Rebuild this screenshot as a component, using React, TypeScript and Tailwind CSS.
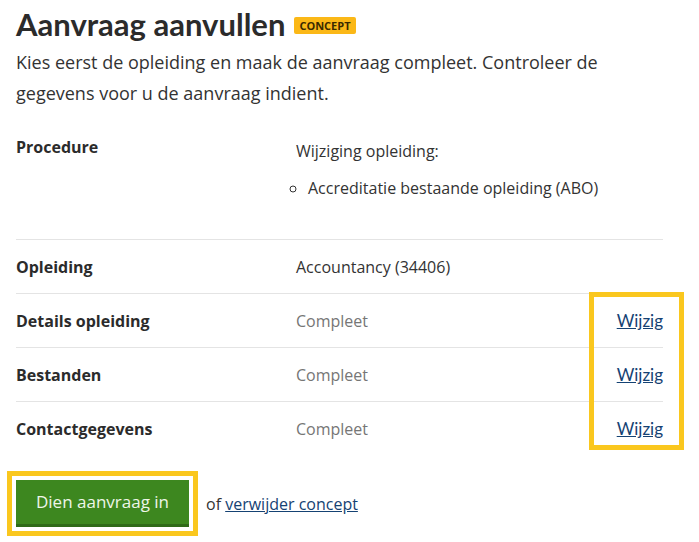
import React from "react";

const rows = [
  { label: "Opleiding", value: "Accountancy (34406)", muted: false, edit: false },
  { label: "Details opleiding", value: "Compleet", muted: true, edit: true },
  { label: "Bestanden", value: "Compleet", muted: true, edit: true },
  { label: "Contactgegevens", value: "Compleet", muted: true, edit: true },
];

const App = () => {
  return (
    <div className="bg-white text-[#2b2b2b] px-4 pt-[2px] min-h-screen" style={{ fontFamily: '"Open Sans", "Noto Sans", sans-serif' }}>
      <h1 className="flex items-center gap-[9px] text-[31px] font-bold leading-[44px]" style={{ fontFamily: "Lato, sans-serif" }}>
        Aanvraag aanvullen
        <span className="bg-[#fbb817] text-[#3a2a00] text-[11px] font-bold leading-[17px] px-[5px] rounded-[2px] mt-[2px]" style={{ fontFamily: '"Open Sans", sans-serif' }}>CONCEPT</span>
      </h1>
      <p className="text-[18px] leading-[31px] text-[#333] mt-[1px] w-[600px]">
        Kies eerst de opleiding en maak de aanvraag compleet. Controleer de gegevens voor u de aanvraag indient.
      </p>

      <div className="relative mt-[24px] w-[647px]">
        <div className="flex border-b border-[#e4e4e4] pb-[38px]">
          <div className="w-[280px] text-[16px] font-bold leading-[26px] pt-[1px]">Procedure</div>
          <div className="flex-1 text-[16px] leading-[26px] text-[#333] pt-[5px]">
            <p>Wijziging opleiding:</p>
            <ul className="mt-[11px] list-[circle] pl-[12px]">
              <li>Accreditatie bestaande opleiding (ABO)</li>
            </ul>
          </div>
        </div>
        {rows.map((r, i) => (
          <div key={r.label} className={`flex items-center pt-[14px] pb-[13px] ${i < rows.length - 1 ? "border-b border-[#e4e4e4]" : ""}`}>
            <div className="w-[280px] text-[16px] font-bold leading-[26px]">{r.label}</div>
            <div className={`flex-1 text-[16px] leading-[26px] ${r.muted ? "text-[#767676]" : "text-[#333]"}`}>{r.value}</div>
            {r.edit && (
              <a href="#" className="text-[17px] leading-[26px] text-[#154273] underline" style={{ fontFamily: "Lato, sans-serif" }}>
                Wijzig
              </a>
            )}
          </div>
        ))}
        {/* highlight round the edit links */}
        <div className="absolute left-[573px] top-[159px] w-[95px] h-[158px] border-[5px] border-[#fac71e] pointer-events-none" />
      </div>

      <div className="flex items-center mt-[25px] gap-[17px]">
        <button className="outline-[5px] outline-solid outline-[#fac71e] outline-offset-[4px] bg-[#3d871f] border-b-[3px] border-[#2f6a18] text-[#eef6e8] text-[17px] h-[47px] w-[173px]">
          Dien aanvraag in
        </button>
        <span className="text-[16px] text-[#333]">
          of <a href="#" className="text-[#154273] underline">verwijder concept</a>
        </span>
      </div>
    </div>
  );
};

export default App;
